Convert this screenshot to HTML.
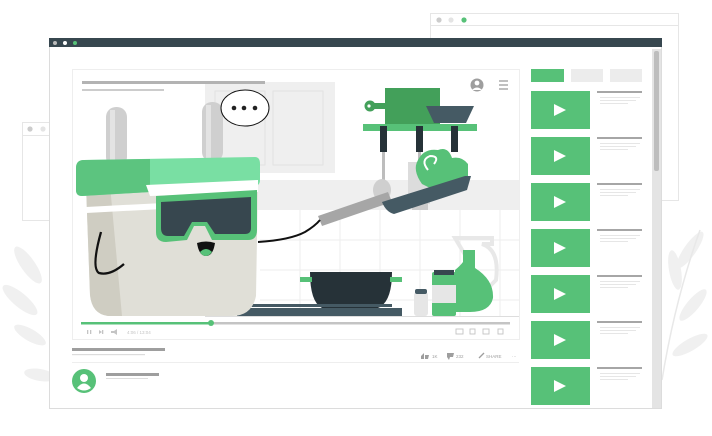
<!DOCTYPE html>
<html><head><meta charset="utf-8"><style>
html,body{margin:0;padding:0;background:#fff;width:712px;height:436px;overflow:hidden;font-family:"Liberation Sans",sans-serif}
</style></head><body>
<svg width="712" height="436" viewBox="0 0 712 436" xmlns="http://www.w3.org/2000/svg">
<!-- leaves -->
<g fill="#f0f0f0">
<ellipse cx="28" cy="265" rx="7" ry="22" transform="rotate(-35 28 265)"/>
<ellipse cx="20" cy="300" rx="7" ry="22" transform="rotate(-50 20 300)"/>
<ellipse cx="30" cy="335" rx="6" ry="18" transform="rotate(-60 30 335)"/>
<ellipse cx="40" cy="375" rx="6" ry="16" transform="rotate(-80 40 375)"/>
<ellipse cx="690" cy="250" rx="6" ry="22" transform="rotate(35 690 250)"/>
<ellipse cx="675" cy="270" rx="6" ry="20" transform="rotate(-10 675 270)"/>
<ellipse cx="693" cy="305" rx="6" ry="20" transform="rotate(40 693 305)"/>
<ellipse cx="690" cy="345" rx="6" ry="20" transform="rotate(60 690 345)"/>
</g>
<path d="M700 230 Q675 300 662 380" stroke="#e8e8e8" stroke-width="1.5" fill="none"/>
<!-- back windows -->
<rect x="430.5" y="13.5" width="248" height="187" fill="#fff" stroke="#e6e6e6"/>
<line x1="430" y1="25.5" x2="678" y2="25.5" stroke="#e6e6e6"/>
<circle cx="439" cy="20" r="2.6" fill="#ccc"/><circle cx="451" cy="20" r="2.6" fill="#e4e4e4"/><circle cx="464" cy="20" r="2.6" fill="#57c178"/>
<rect x="22.5" y="122.5" width="40" height="98" fill="#fff" stroke="#e6e6e6"/>
<line x1="22" y1="135.5" x2="60" y2="135.5" stroke="#e6e6e6"/>
<circle cx="30" cy="129" r="2.6" fill="#ccc"/><circle cx="43" cy="129" r="2.6" fill="#e4e4e4"/>
<!-- main window -->
<rect x="49.5" y="38.5" width="612" height="370" fill="#fff" stroke="#dcdcdc"/>
<rect x="49" y="38" width="613" height="9" fill="#37474f"/>
<circle cx="55" cy="43" r="2" fill="#bbb"/><circle cx="65" cy="43" r="2" fill="#fff"/><circle cx="75" cy="43" r="2" fill="#57c178"/>
<rect x="652" y="49" width="9" height="359" fill="#e4e4e4"/>
<rect x="654" y="51" width="5" height="120" rx="2" fill="#bdbdbd"/>
<!-- video frame -->
<rect x="72.5" y="69.5" width="447" height="270" fill="#fff" stroke="#eeeeee"/>
<!-- kitchen background -->
<rect x="205" y="82" width="130" height="91" fill="#efefef"/>
<rect x="215" y="91" width="50" height="74" fill="none" stroke="#e2e2e2"/>
<rect x="273" y="91" width="50" height="74" fill="none" stroke="#e2e2e2"/>
<rect x="205" y="180" width="314" height="30" fill="#efefef"/>
<g stroke="#eeeeee" stroke-width="1">
<line x1="260" y1="240" x2="519" y2="240"/><line x1="260" y1="270" x2="519" y2="270"/><line x1="260" y1="300" x2="519" y2="300"/>
<line x1="300" y1="210" x2="300" y2="316"/><line x1="340" y1="210" x2="340" y2="316"/><line x1="380" y1="210" x2="380" y2="316"/><line x1="420" y1="210" x2="420" y2="316"/><line x1="460" y1="210" x2="460" y2="316"/><line x1="500" y1="210" x2="500" y2="316"/>
</g>
<rect x="408" y="162" width="22" height="42" fill="#dcdcdc"/>
<rect x="412" y="202" width="16" height="8" fill="#ccc"/>
<!-- title lines in video -->
<rect x="82" y="81" width="183" height="3" fill="#b3b3b3"/>
<rect x="82" y="89" width="82" height="2" fill="#ccc"/>
<!-- top right icons -->
<circle cx="477" cy="85" r="6.5" fill="#9e9e9e"/><circle cx="477" cy="83" r="2.4" fill="#fff"/><path d="M472 90 Q477 85 482 90 Z" fill="#fff"/>
<g stroke="#9e9e9e" stroke-width="1.3"><line x1="499" y1="81" x2="508" y2="81"/><line x1="499" y1="85" x2="508" y2="85"/><line x1="499" y1="89" x2="508" y2="89"/></g>
<!-- shelf -->
<rect x="385" y="88" width="55" height="36" fill="#43a05a"/>
<circle cx="370" cy="106" r="5.5" fill="#43a05a"/><rect x="370" y="103" width="17" height="6" fill="#43a05a"/><circle cx="369" cy="106" r="1.6" fill="#fff"/>
<path d="M426 106 L474 106 L466 123 L434 123 Z" fill="#455a64"/>
<rect x="363" y="124" width="114" height="7" fill="#57c178"/>
<g fill="#263238"><rect x="380" y="126" width="7" height="26"/><rect x="416" y="126" width="7" height="26"/><rect x="451" y="126" width="7" height="26"/></g>
<rect x="382" y="152" width="3" height="30" fill="#bdbdbd"/>
<ellipse cx="382" cy="190" rx="9" ry="11" fill="#cfcfcf"/>
<rect x="418" y="152" width="3" height="20" fill="#bdbdbd"/>
<!-- pan -->
<path d="M318 216 L388 192 L392 202 L322 226 Z" fill="#a6a6a6"/>
<path d="M422 184 Q412 170 418 160 Q424 148 438 150 Q448 146 452 158 Q462 156 468 164 L468 176 L430 188 Z" fill="#57c178"/>
<path d="M428 170 Q420 160 430 156 Q440 156 434 164" fill="none" stroke="#fff" stroke-width="2"/>
<path d="M382 202 L465 176 L471 176 L467 190 L394 214 Q386 212 382 202 Z" fill="#455a64"/>
<path d="M258 242 Q290 240 305 232 Q315 226 320 220" fill="none" stroke="#111" stroke-width="2"/>
<!-- pot and stove -->
<path d="M310 272 L392 272 Q392 302 378 308 L322 308 Q310 302 310 272 Z" fill="#263238"/>
<rect x="300" y="277" width="12" height="5" fill="#57c178"/><rect x="390" y="277" width="12" height="5" fill="#57c178"/>
<rect x="237" y="308" width="165" height="8" fill="#455a64"/>
<rect x="242" y="304" width="150" height="3" fill="#455a64"/>
<!-- bottles -->
<path d="M455 238 L492 238 L492 244 L482 244 Q500 250 496 280 L486 290 Z" fill="none" stroke="#e8e8e8" stroke-width="4"/>
<path d="M463 250 L475 250 L475 268 Q494 280 493 298 Q490 312 470 312 L455 312 L455 270 Q460 266 463 262 Z" fill="#57c178"/>
<rect x="414" y="292" width="14" height="24" rx="3" fill="#e6e6e6"/><rect x="415" y="289" width="12" height="5" rx="2" fill="#455a64"/>
<rect x="432" y="272" width="24" height="44" rx="2" fill="#57c178"/><rect x="432" y="285" width="24" height="18" fill="#e6e6e6"/><rect x="434" y="270" width="20" height="5" fill="#37474f"/>
<rect x="205" y="316" width="314" height="1" fill="#ddd"/>
<!-- plug -->
<rect x="106" y="107" width="21" height="60" rx="10" fill="#cfcfcf"/><rect x="110" y="110" width="5" height="55" fill="#e3e3e3"/>
<rect x="202" y="102" width="21" height="60" rx="10" fill="#cfcfcf"/><rect x="206" y="105" width="5" height="55" fill="#e3e3e3"/>
<path d="M86 185 L258 178 L256 296 Q252 316 232 316 L108 316 Q92 314 90 295 Z" fill="#e0dfd7"/>
<path d="M86 185 L110 185 L122 316 L108 316 Q92 314 90 295 Z" fill="#cfcdc2"/>
<path d="M76 168 Q76 160 84 160 L255 157 Q260 157 260 164 L260 180 Q260 186 254 186 L82 196 Q76 196 76 190 Z" fill="#79dfa3"/>
<path d="M76 168 Q76 160 84 160 L150 159 L150 192 L82 196 Q76 196 76 190 Z" fill="#5cc47f"/>
<rect x="86" y="207" width="70" height="6" fill="#fff" transform="rotate(-3 86 207)"/>
<path d="M146 185 L258 180 L258 192 L150 196 Z" fill="#fff"/>
<path d="M156 196 L257 190 L257 230 Q257 240 248 240 L212 240 L205 226 L194 226 L187 240 L166 242 Q156 242 156 232 Z" fill="#57c178"/>
<path d="M161 202 L251 197 L251 228 Q251 234 245 234 L215 234 L207 222 L192 222 L184 236 L168 236 Q161 236 161 228 Z" fill="#37474f"/>
<path d="M197 243 Q206 240 215 243 Q213 256 206 256 Q199 256 197 243 Z" fill="#111"/>
<path d="M200 252 Q206 246 212 252 Q209 256 206 256 Q202 256 200 252 Z" fill="#57c178"/>
<path d="M101 232 Q91 268 99 273 Q110 276 124 264" fill="none" stroke="#111" stroke-width="2.3"/>
<ellipse cx="245" cy="108" rx="24" ry="18" fill="#fff" stroke="#111" stroke-width="1"/>
<circle cx="234" cy="108" r="2.3" fill="#222"/><circle cx="244" cy="108" r="2.3" fill="#222"/><circle cx="255" cy="108" r="2.3" fill="#222"/>
<!-- progress bar -->
<rect x="81" y="322" width="429" height="2.5" fill="#c4c4c4"/>
<rect x="81" y="322" width="130" height="2.5" fill="#57c178"/>
<circle cx="211" cy="323" r="3" fill="#57c178"/>
<g fill="#c4c4c4"><rect x="87" y="330" width="1.3" height="4"/><rect x="90" y="330" width="1.3" height="4"/><path d="M99 330 L102 332 L99 334 Z"/><rect x="102" y="330" width="1.3" height="4"/><path d="M111 331 L114 331 L117 329 L117 335 L114 333 L111 333 Z"/></g>
<text x="127" y="334" font-size="4.5" fill="#c4c4c4">4:06 / 13:04</text>
<g fill="none" stroke="#c4c4c4" stroke-width="0.9"><rect x="456" y="329" width="7" height="5"/><rect x="470" y="329" width="5" height="5"/><rect x="483" y="329" width="6" height="5"/><rect x="498" y="329" width="5" height="5"/></g>
<!-- below video -->
<rect x="72" y="348" width="93" height="3" fill="#9e9e9e"/>
<rect x="72" y="354" width="73" height="1.2" fill="#dcdcdc"/>
<rect x="72" y="362" width="447" height="1" fill="#eeeeee"/>
<g fill="#9e9e9e" font-size="4.5">
<path d="M421 356 L424 353 L424 359 L421 359 Z M425 355 L429 355 L428 359 L425 359 Z"/><text x="432" y="358">1K</text>
<path d="M447 353 L454 353 L453 357 L450 357 L449 360 L447 357 Z"/><text x="456" y="358">232</text>
<path d="M479 358 L484 353" stroke="#9e9e9e" stroke-width="1.3"/><text x="486" y="358">SHARE</text>
<text x="512" y="358">···</text>
</g>
<circle cx="84" cy="381" r="12" fill="#57c178"/>
<circle cx="84" cy="378" r="4" fill="#fff"/><path d="M77 388 Q84 379 91 388 Q84 393 77 388 Z" fill="#fff"/>
<rect x="106" y="373" width="53" height="3" fill="#9e9e9e"/>
<rect x="106" y="378" width="42" height="1" fill="#ddd"/>
<!-- sidebar -->
<rect x="531" y="69" width="33" height="13" fill="#57c178"/>
<rect x="571" y="69" width="32" height="13" fill="#ececec"/>
<rect x="610" y="69" width="32" height="13" fill="#ececec"/>
<g id="th">
<rect x="531" y="91" width="59" height="38" fill="#57c178"/>
<path d="M554 104 L566 110 L554 116 Z" fill="#fff"/>
<rect x="597" y="91" width="45" height="2" fill="#a6a6a6"/>
<rect x="600" y="97" width="40" height="1" fill="#e6e6e6"/><rect x="600" y="100" width="36" height="1" fill="#e6e6e6"/><rect x="600" y="103" width="28" height="1" fill="#e6e6e6"/>
</g>
<use href="#th" y="46"/><use href="#th" y="92"/><use href="#th" y="138"/><use href="#th" y="184"/><use href="#th" y="230"/><use href="#th" y="276"/>
<rect x="531" y="406" width="60" height="2" fill="#fff"/>
</svg>
</body></html>
